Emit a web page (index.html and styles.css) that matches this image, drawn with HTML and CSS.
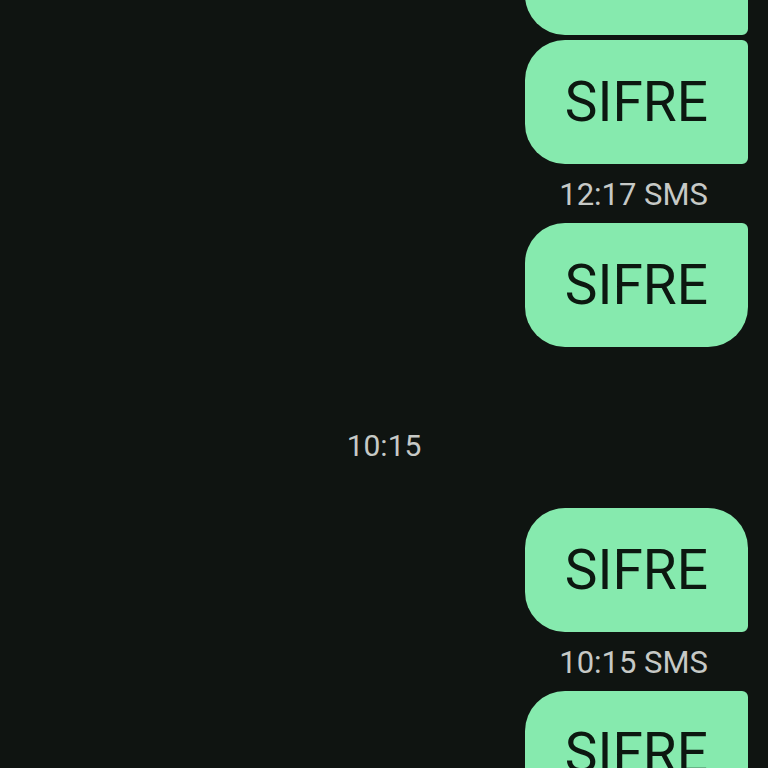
FILE: index.html
```html
<!DOCTYPE html>
<html lang="tr">
<head>
  <meta charset="UTF-8">
  <meta name="viewport" content="width=device-width, initial-scale=1.0">
  <title>Mesajlar</title>
  <link rel="stylesheet" href="styles.css">
</head>
<body>
  <main class="thread">
    <div class="bubble end">SIFRE</div>
    <div class="bubble middle">SIFRE</div>
    <div class="stamp">12:17 SMS</div>
    <div class="bubble last">SIFRE</div>

    <div class="day">10:15</div>

    <div class="bubble first">SIFRE</div>
    <div class="stamp">10:15 SMS</div>
    <div class="bubble start">SIFRE</div>
  </main>
</body>
</html>
```

FILE: styles.css
```css
* {
  margin: 0; padding: 0; box-sizing: border-box;
}
html, body {
  height: 100%;
}
body {
  background: #0f1411;
  font-family: 'Roboto', 'Noto Sans', sans-serif;
  overflow: hidden;
}
.thread {
  display: flex;
  flex-direction: column;
  align-items: flex-end;
  padding-right: 20px;
}
.bubble {
  background: #86eaae;
  color: #0c1810;
  font-size: 55px;
  line-height: 64px;
  padding: 30px 40px;
  border-radius: 40px 6px 6px 40px;
}
/* scrolled: first bubble sits above the top edge */
.bubble.end {
  margin-top: -89px;
  margin-bottom: 5px;
}
.bubble.last {
  border-radius: 40px 6px 40px 40px;
}
.bubble.first {
  border-radius: 40px 40px 6px 40px;
}
.stamp {
  color: #c6c9c6;
  font-size: 31px;
  line-height: 40px;
  margin: 11px 40px 8px 0;
}
.day {
  align-self: center;
  color: #c6c9c6;
  font-size: 30px;
  line-height: 40px;
  margin: 79px 0 42px 20px;
}
```
